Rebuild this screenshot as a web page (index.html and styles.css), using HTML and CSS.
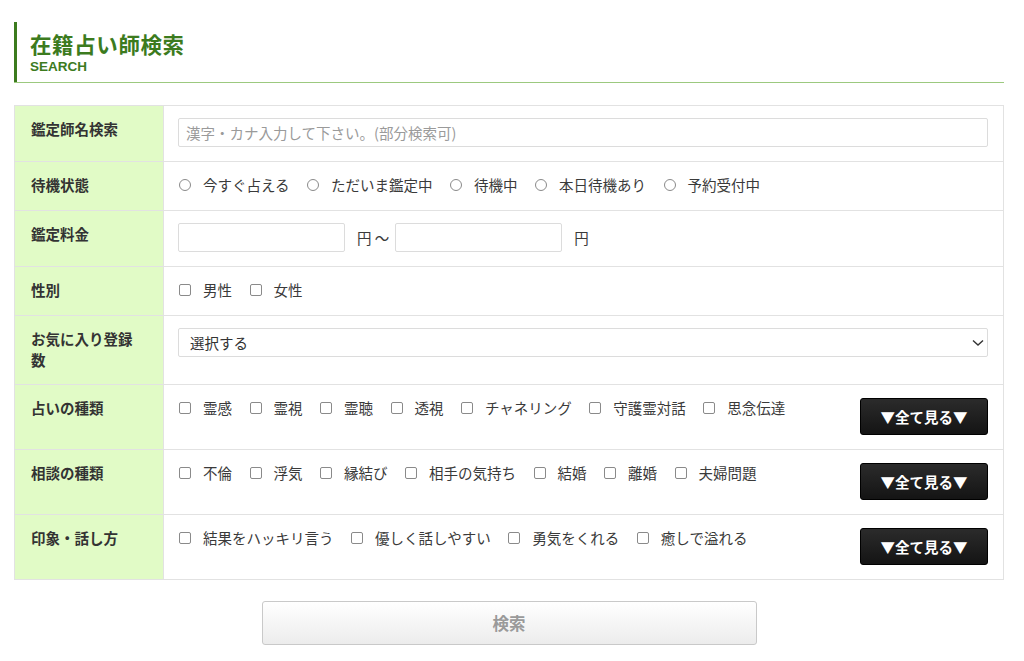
FILE: index.html
```html
<!DOCTYPE html>
<html lang="ja">
<head>
<meta charset="utf-8">
<title>在籍占い師検索</title>
<link rel="stylesheet" href="styles.css">
</head>
<body>
<div class="page">
  <div class="heading">
    <div class="heading-inner">
      <h1 class="title">在籍占い師検索</h1>
      <p class="subtitle">SEARCH</p>
    </div>
  </div>

  <table class="search-table">
    <tr>
      <th>鑑定師名検索</th>
      <td><input class="text-input wide" type="text" placeholder="漢字・カナ入力して下さい。(部分検索可)"></td>
    </tr>
    <tr>
      <th>待機状態</th>
      <td>
        <div class="options">
          <label class="opt"><input type="radio" name="st" class="radio">今すぐ占える</label>
          <label class="opt"><input type="radio" name="st" class="radio">ただいま鑑定中</label>
          <label class="opt"><input type="radio" name="st" class="radio">待機中</label>
          <label class="opt"><input type="radio" name="st" class="radio">本日待機あり</label>
          <label class="opt"><input type="radio" name="st" class="radio">予約受付中</label>
        </div>
      </td>
    </tr>
    <tr>
      <th>鑑定料金</th>
      <td>
        <div class="price">
          <input class="text-input price-input" type="text">
          <span class="unit">円 〜</span>
          <input class="text-input price-input" type="text">
          <span class="unit unit-end">円</span>
        </div>
      </td>
    </tr>
    <tr>
      <th>性別</th>
      <td>
        <div class="options">
          <label class="opt"><input type="checkbox" class="check">男性</label>
          <label class="opt"><input type="checkbox" class="check">女性</label>
        </div>
      </td>
    </tr>
    <tr>
      <th>お気に入り登録数</th>
      <td>
        <div class="select-wrap">
          <select class="select"><option>選択する</option></select>
          <svg class="chev" width="12" height="8" viewBox="0 0 12 8"><path d="M1 1.5 L6 6 L11 1.5" fill="none" stroke="#333" stroke-width="1.4"/></svg>
        </div>
      </td>
    </tr>
    <tr>
      <th>占いの種類</th>
      <td>
        <div class="opt-row">
          <div class="options">
            <label class="opt"><input type="checkbox" class="check">霊感</label>
            <label class="opt"><input type="checkbox" class="check">霊視</label>
            <label class="opt"><input type="checkbox" class="check">霊聴</label>
            <label class="opt"><input type="checkbox" class="check">透視</label>
            <label class="opt"><input type="checkbox" class="check">チャネリング</label>
            <label class="opt"><input type="checkbox" class="check">守護霊対話</label>
            <label class="opt"><input type="checkbox" class="check">思念伝達</label>
          </div>
          <button class="more" type="button">▼全て見る▼</button>
        </div>
      </td>
    </tr>
    <tr>
      <th>相談の種類</th>
      <td>
        <div class="opt-row">
          <div class="options">
            <label class="opt"><input type="checkbox" class="check">不倫</label>
            <label class="opt"><input type="checkbox" class="check">浮気</label>
            <label class="opt"><input type="checkbox" class="check">縁結び</label>
            <label class="opt"><input type="checkbox" class="check">相手の気持ち</label>
            <label class="opt"><input type="checkbox" class="check">結婚</label>
            <label class="opt"><input type="checkbox" class="check">離婚</label>
            <label class="opt"><input type="checkbox" class="check">夫婦問題</label>
          </div>
          <button class="more" type="button">▼全て見る▼</button>
        </div>
      </td>
    </tr>
    <tr>
      <th>印象・話し方</th>
      <td>
        <div class="opt-row">
          <div class="options">
            <label class="opt"><input type="checkbox" class="check">結果をハッキリ言う</label>
            <label class="opt"><input type="checkbox" class="check">優しく話しやすい</label>
            <label class="opt"><input type="checkbox" class="check">勇気をくれる</label>
            <label class="opt"><input type="checkbox" class="check">癒しで溢れる</label>
          </div>
          <button class="more" type="button">▼全て見る▼</button>
        </div>
      </td>
    </tr>
  </table>

  <div class="submit-area">
    <button class="submit" type="button">検索</button>
  </div>
</div>
</body>
</html>
```

FILE: styles.css
```css
* { box-sizing: border-box; }
html, body { margin: 0; padding: 0; background: #fff; }
body {
  font-family: "Noto Sans CJK JP", "Noto Sans", sans-serif;
  color: #333;
}
.page {
  width: 990px;
  margin-left: 14px;
  padding-top: 22px;
}
.heading {
  border-bottom: 1px solid #9cc97f;
}
.heading-inner {
  border-left: 3px solid #3c7b1e;
  padding: 7px 0 7px 13px;
}
.title {
  margin: 0;
  font-size: 21.5px;
  line-height: 30px;
  font-weight: 700;
  color: #3c7b1e;
  letter-spacing: 0.6px;
}
.subtitle {
  margin: 0;
  font-family: "Liberation Sans", Arial, sans-serif;
  font-size: 13.5px;
  line-height: 16px;
  font-weight: 700;
  color: #3c7b1e;
}
.search-table {
  margin-top: 22px;
  width: 990px;
  border-collapse: collapse;
  border: 1px solid #e2e2e2;
}
.search-table th,
.search-table td {
  border: 1px solid #e2e2e2;
  vertical-align: top;
  text-align: left;
}
.search-table th {
  width: 149px;
  background: #e1fbc6;
  font-size: 14.5px;
  font-weight: 700;
  line-height: 21px;
  color: #333;
  padding: 12px 20px 14px 16px;
}
.search-table td {
  padding: 12px 15px 14px 14px;
  font-size: 14.5px;
  line-height: 22px;
  color: #3a3a3a;
}
.text-input {
  display: block;
  height: 29px;
  border: 1px solid #dcdcdc;
  border-radius: 2px;
  padding: 0 7px;
  font-family: inherit;
  font-size: 14.5px;
  color: #333;
  background: #fff;
  outline: none;
}
.text-input::placeholder { color: #9a9a9a; }
.wide { width: 100%; }
.price {
  display: flex;
  align-items: center;
}
.price-input { width: 167px; }
.unit { margin: 0 6px 0 12px; }
.unit-end { margin-right: 0; }
.options {
  display: flex;
  flex-wrap: wrap;
  align-items: center;
}
.opt {
  display: inline-flex;
  align-items: center;
  gap: 12px;
  margin-right: 16.5px;
  white-space: nowrap;
}
.opt:last-child { margin-right: 0; }
.radio, .check {
  -webkit-appearance: none;
  appearance: none;
  width: 12px;
  height: 12px;
  margin: 0 0 0 1px;
  border: 1px solid #8a8a8a;
  background: #fff;
  flex: none;
}
.radio { border-radius: 50%; }
.check { border-radius: 2px; }
.select-wrap {
  position: relative;
}
.select {
  -webkit-appearance: none;
  appearance: none;
  display: block;
  width: 100%;
  height: 29px;
  border: 1px solid #dcdcdc;
  border-radius: 2px;
  background: #fff;
  padding: 0 11px;
  font-family: inherit;
  font-size: 14.5px;
  color: #333;
}
.chev {
  position: absolute;
  right: 4px;
  top: 11px;
  pointer-events: none;
}
.opt-row {
  display: flex;
  justify-content: space-between;
  align-items: flex-start;
}
.more {
  flex: none;
  width: 128px;
  height: 37px;
  margin-top: 1px;
  border: 1px solid #000;
  border-radius: 3px;
  background: linear-gradient(#2b2b2b, #141414);
  color: #fff;
  font-family: inherit;
  font-size: 14.5px;
  font-weight: 700;
  padding: 0;
  cursor: pointer;
}
.submit-area {
  display: flex;
  justify-content: center;
  padding-top: 21px;
}
.submit {
  width: 495px;
  height: 44px;
  border: 1px solid #c9c9c9;
  border-radius: 3px;
  background: linear-gradient(#ffffff, #ececec);
  color: #9a9a9a;
  font-family: inherit;
  font-size: 16.5px;
  font-weight: 700;
}
```
